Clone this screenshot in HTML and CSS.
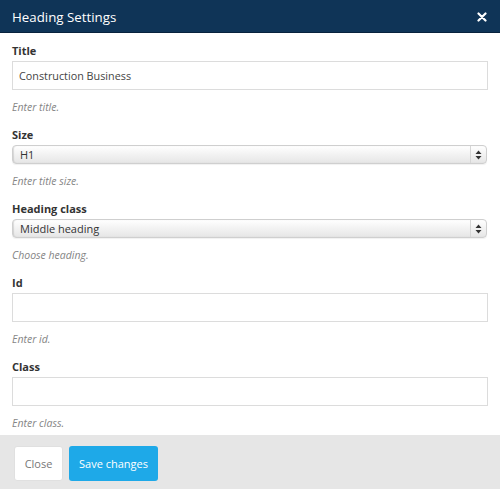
FILE: index.html
```html
<!DOCTYPE html>
<html>
<head>
<meta charset="utf-8">
<link rel="stylesheet" href="styles.css">
</head>
<body>
<div class="modal">
  <div class="modal-header">
    <span class="modal-title">Heading Settings</span>
    <span class="close-x">
      <svg width="10" height="10" viewBox="0 0 10 10"><path d="M1.5 1.5 L8.5 8.5 M8.5 1.5 L1.5 8.5" stroke="#fff" stroke-width="2.2" stroke-linecap="round"/></svg>
    </span>
  </div>
  <div class="modal-body">
    <div class="group">
      <label class="label">Title</label>
      <div class="input">Construction Business</div>
      <div class="help">Enter title.</div>
    </div>
    <div class="group">
      <label class="label">Size</label>
      <div class="select"><span class="select-text">H1</span><span class="select-arrow"><svg width="7" height="10" viewBox="0 0 7 10"><path d="M3.5 0.5 L6.5 4 H0.5 Z M3.5 9.5 L6.5 6 H0.5 Z" fill="#333"/></svg></span></div>
      <div class="help">Enter title size.</div>
    </div>
    <div class="group">
      <label class="label">Heading class</label>
      <div class="select"><span class="select-text">Middle heading</span><span class="select-arrow"><svg width="7" height="10" viewBox="0 0 7 10"><path d="M3.5 0.5 L6.5 4 H0.5 Z M3.5 9.5 L6.5 6 H0.5 Z" fill="#333"/></svg></span></div>
      <div class="help">Choose heading.</div>
    </div>
    <div class="group">
      <label class="label">Id</label>
      <div class="input"></div>
      <div class="help">Enter id.</div>
    </div>
    <div class="group last">
      <label class="label">Class</label>
      <div class="input"></div>
      <div class="help">Enter class.</div>
    </div>
  </div>
  <div class="modal-footer">
    <button class="btn btn-default">Close</button>
    <button class="btn btn-primary">Save changes</button>
  </div>
</div>
</body>
</html>
```
FILE: styles.css
```css
html, body {
  margin: 0;
  padding: 0;
  background: #fff;
}
body {
  font-family: "Open Sans", "Liberation Sans", sans-serif;
  color: #333;
  width: 500px;
  height: 489px;
  overflow: hidden;
}
.modal {
  display: flex;
  flex-direction: column;
  height: 489px;
}
.modal-header {
  flex-shrink: 0;
  height: 32px;
  background: #0f3457;
  border-bottom: 1px solid #08223d;
  display: flex;
  align-items: center;
  justify-content: space-between;
  padding: 0 13px 0 12px;
  box-sizing: content-box;
}
.modal-title {
  color: #fff;
  font-size: 13.3px;
  font-weight: 400;
  line-height: 16px;
  margin-top: 1px;
}
.close-x {
  display: flex;
  width: 10px;
  height: 10px;
  margin-top: 2px;
}
.modal-body {
  padding: 10px 12px 0 12px;
  flex: 1;
  min-height: 0;
}
.group {
  display: flex;
  flex-direction: column;
  margin-bottom: 12px;
}
.group.last {
  margin-bottom: 0;
}
.label {
  font-size: 11px;
  font-weight: 700;
  line-height: 16px;
  color: #333;
  margin-bottom: 2px;
}
.input {
  height: 29px;
  box-sizing: border-box;
  border: 1px solid #dcdcdc;
  width: 476px;
  padding: 0 6px;
  font-size: 10.8px;
  line-height: 27px;
  color: #444;
}
.help {
  font-size: 10.5px;
  font-style: italic;
  color: #858585;
  line-height: 16px;
  margin-top: 9px;
}
.select {
  position: relative;
  height: 19px;
  width: 475px;
  box-sizing: border-box;
  border: 1px solid #cfcfcf;
  border-radius: 4px;
  background: linear-gradient(#ffffff, #f2f2f2 50%, #e6e6e6);
  box-shadow: inset 1px 0 1px rgba(0,0,0,0.12), 0 1px 1px rgba(0,0,0,0.06);
  display: flex;
  align-items: center;
  padding-left: 7px;
}
.select-text {
  font-size: 11px;
  color: #333;
  line-height: 17px;
}
.select-arrow {
  position: absolute;
  right: 0;
  top: 0;
  bottom: 0;
  width: 15px;
  border-left: 1px solid #d6d6d6;
  display: flex;
  align-items: center;
  justify-content: center;
}
.modal-footer {
  flex-shrink: 0;
  height: 54px;
  background: #e6e6e6;
  display: flex;
  align-items: flex-start;
  gap: 6px;
  padding: 11px 14px 0;
  box-sizing: border-box;
}
.btn {
  height: 35px;
  border: none;
  border-radius: 3px;
  font-family: "Open Sans", "Liberation Sans", sans-serif;
  font-size: 11px;
  padding: 0;
  cursor: pointer;
}
.btn-default {
  width: 49px;
  background: #fff;
  color: #777;
  border: 1px solid #e0e0e0;
}
.btn-primary {
  width: 89px;
  background: #1ea9e8;
  color: #fff;
}
```
